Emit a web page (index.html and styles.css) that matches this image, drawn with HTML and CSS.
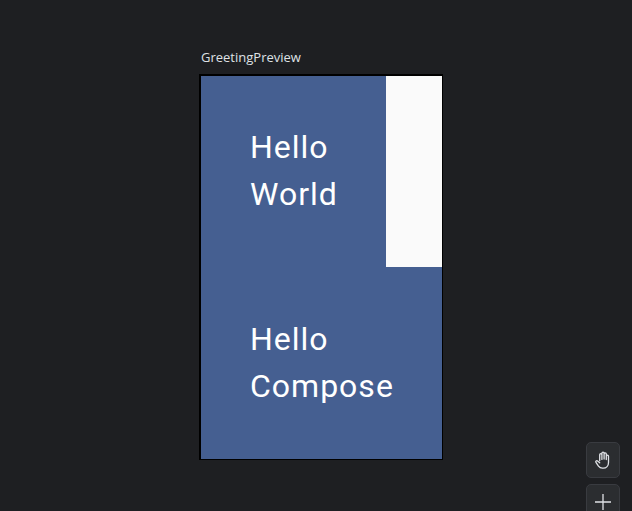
FILE: index.html
```html
<!DOCTYPE html>
<html>
<head>
<meta charset="utf-8">
<link rel="stylesheet" href="styles.css">
</head>
<body>
<div class="canvas">
  <div class="preview">
    <div class="preview-label">GreetingPreview</div>
    <div class="frame">
      <div class="row">
        <div class="surface surface-top">
          <div class="greeting">Hello<br>World</div>
        </div>
        <div class="blank"></div>
      </div>
      <div class="surface surface-bottom">
        <div class="greeting">Hello<br>Compose</div>
      </div>
    </div>
  </div>
  <div class="tools">
    <button class="tool" aria-label="Pan">
      <svg width="22" height="22" viewBox="0 0 20 20" fill="none" stroke="#dfe1e5" stroke-width="1.2" stroke-linejoin="round" stroke-linecap="round">
        <path d="M7 10.5V5.2a1 1 0 0 1 2 0V9.5M9 9.2V3.8a1 1 0 0 1 2 0v5.4M11 9.2V4.6a1 1 0 0 1 2 0v5M13 9.6V6.6a1 1 0 0 1 2 0v5.6c0 3-2 5.2-4.8 5.2H9.4c-1.6 0-2.6-.7-3.5-1.9L3.6 12.2a1 1 0 0 1 1.5-1.3L7 12.5"/>
      </svg>
    </button>
    <button class="tool" aria-label="Zoom in">
      <svg width="20" height="20" viewBox="0 0 20 20" fill="none" stroke="#dfe1e5" stroke-width="1.3">
        <path d="M10 2v16M2 10h16"/>
      </svg>
    </button>
  </div>
</div>
</body>
</html>
```
FILE: styles.css
```css
html, body {
  margin: 0;
  padding: 0;
  background: #1e1f22;
  overflow: hidden;
}

.canvas {
  position: relative;
  width: 632px;
  height: 511px;
  padding: 48px 0 0 199px;
  box-sizing: border-box;
}

.preview {
  display: flex;
  flex-direction: column;
  align-items: flex-start;
}

.preview-label {
  font-family: "Open Sans", "Noto Sans", sans-serif;
  font-size: 13px;
  line-height: 18px;
  color: #dfe1e5;
  padding-left: 2px;
  height: 26px;
}

.frame {
  width: 241px;
  border-style: solid;
  border-color: #000;
  border-width: 2px 1px 1px 2px;
  display: flex;
  flex-direction: column;
  background: #455f91;
}

.row {
  display: flex;
}

.surface {
  background: #455f91;
  height: 192px;
  box-sizing: border-box;
  padding: 48px 0 0 49px;
}

.surface-top {
  width: 185px;
}

.blank {
  flex: 1;
  height: 191px;
  background: #fafafa;
}

.surface-bottom {
  height: 191px;
}

.greeting {
  font-family: Roboto, "Liberation Sans", sans-serif;
  font-size: 32px;
  line-height: 47px;
  color: #ffffff;
  letter-spacing: 1px;
}

.tools {
  position: absolute;
  left: 586px;
  top: 442px;
  display: flex;
  flex-direction: column;
  gap: 6px;
}

.tool {
  width: 34px;
  height: 36px;
  padding: 0;
  margin: 0;
  border: 1px solid #393b40;
  border-radius: 5px;
  background: #2b2d30;
  display: flex;
  align-items: center;
  justify-content: center;
}
```
